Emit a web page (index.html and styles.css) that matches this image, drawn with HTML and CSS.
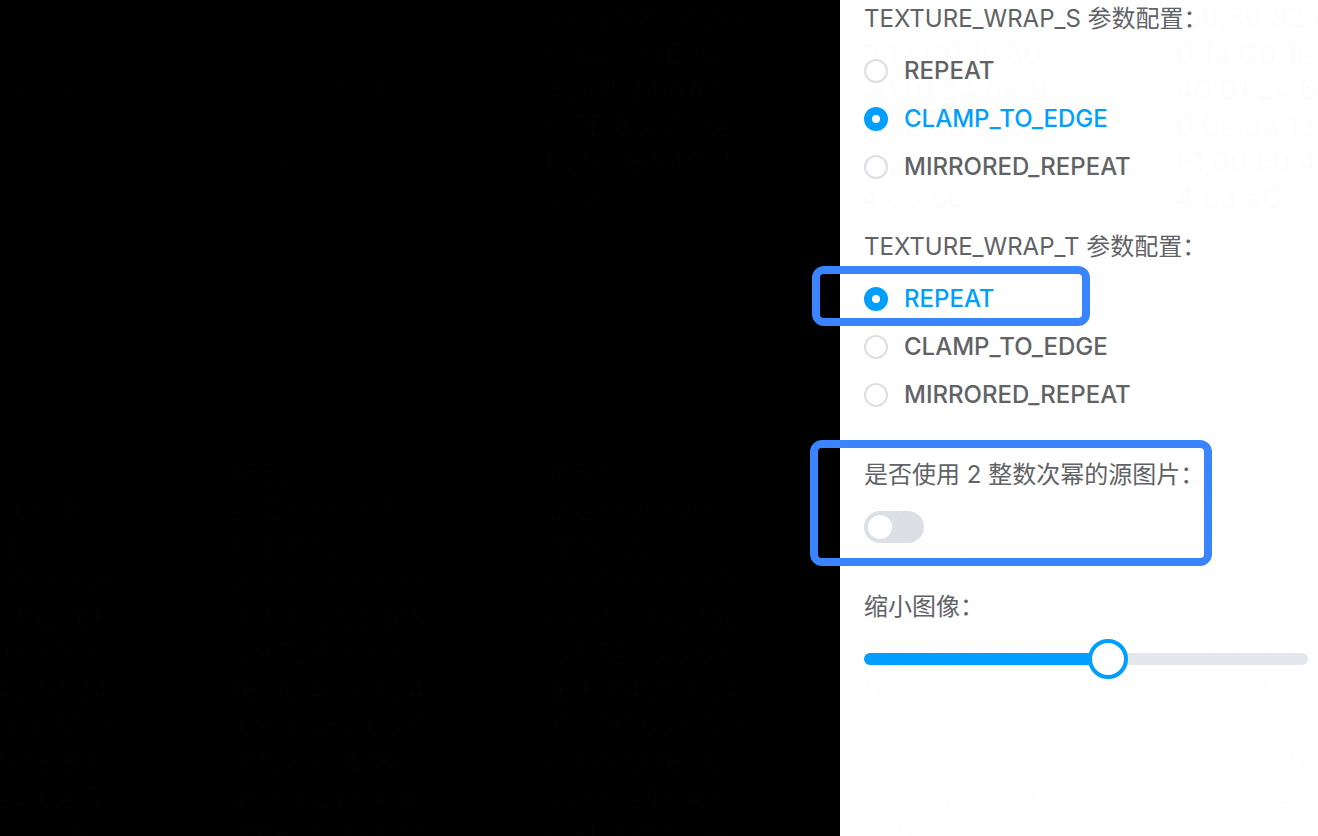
FILE: index.html
```html
<!DOCTYPE html>
<html lang="zh-CN">
<head>
<meta charset="utf-8">
<title>纹理参数配置</title>
<link rel="stylesheet" href="styles.css">
</head>
<body>
<main class="app">
  <canvas class="stage"></canvas>
  <form class="panel">
    <fieldset class="group">
      <legend class="label">TEXTURE_WRAP_S 参数配置：</legend>
      <label class="option"><input class="radio" type="radio" name="wrap-s"><span>REPEAT</span></label>
      <label class="option"><input class="radio" type="radio" name="wrap-s" checked><span>CLAMP_TO_EDGE</span></label>
      <label class="option"><input class="radio" type="radio" name="wrap-s"><span>MIRRORED_REPEAT</span></label>
    </fieldset>
    <fieldset class="group">
      <legend class="label">TEXTURE_WRAP_T 参数配置：</legend>
      <label class="option marked"><input class="radio" type="radio" name="wrap-t" checked><span>REPEAT</span></label>
      <label class="option"><input class="radio" type="radio" name="wrap-t"><span>CLAMP_TO_EDGE</span></label>
      <label class="option"><input class="radio" type="radio" name="wrap-t"><span>MIRRORED_REPEAT</span></label>
    </fieldset>
    <div class="group field marked">
      <label class="label" for="pot">是否使用 2 整数次幂的源图片：</label>
      <input class="switch" id="pot" type="checkbox" role="switch">
    </div>
    <div class="group field">
      <label class="label" for="scale">缩小图像：</label>
      <input class="slider" id="scale" type="range" min="0" max="100" step="0.5" value="55.5">
    </div>
  </form>
</main>
<div class="watermark" aria-hidden="true"></div>
<script src="watermark.js"></script>
</body>
</html>
```
FILE: styles.css
```css
*, *::before, *::after { box-sizing: border-box; }
body {
  margin: 0;
  background: #000;
  color: #606266;
  font: 24px/36px Inter, "Noto Sans CJK SC", sans-serif;
}
.app {
  display: grid;
  grid-template-columns: minmax(0, 1fr) 478px;
  height: 100vh;
  overflow: hidden;
}
.stage { width: 100%; height: 100%; background: #000; }
.panel {
  display: flex;
  flex-direction: column;
  gap: 38px;
  padding: 1px 10px 0 24px;
  background: #fff;
}
.group { margin: 0; padding: 0; border: 0; min-width: 0; }
.label { display: block; padding: 0; font-weight: 400; }
legend.label { margin-bottom: 10px; }
.option {
  position: relative;
  display: flex;
  align-items: center;
  gap: 16px;
  height: 48px;
  font-weight: 500;
}
.radio {
  appearance: none;
  width: 24px;
  height: 24px;
  margin: 0;
  border: 2px solid #dcdfe6;
  border-radius: 50%;
  background: #fff;
}
.radio:checked { border: 8px solid #009fff; }
.radio:checked + span { color: #009fff; }
.field {
  position: relative;
  display: flex;
  flex-direction: column;
  align-items: flex-start;
  gap: 18px;
}
.field + .field { margin-top: 8px; gap: 14px; }
.switch {
  appearance: none;
  width: 60px;
  height: 32px;
  margin: 0;
  padding: 4px;
  border-radius: 16px;
  background: #dcdfe6;
}
.switch::before {
  content: "";
  display: block;
  width: 24px;
  height: 24px;
  border-radius: 50%;
  background: #fff;
}
.switch:checked { background: #009fff; }
.switch:checked::before { margin-left: auto; }
.slider {
  appearance: none;
  width: 100%;
  height: 40px;
  margin: 0;
  background: none;
}
.slider::-webkit-slider-runnable-track {
  height: 12px;
  border-radius: 6px;
  background: linear-gradient(90deg, #009fff 55%, #e4e7ed 55%);
}
.slider::-webkit-slider-thumb {
  appearance: none;
  width: 40px;
  height: 40px;
  margin-top: -14px;
  border: 4px solid #009fff;
  border-radius: 50%;
  background: #fff;
}
.marked::after {
  content: "";
  position: absolute;
  border: 8px solid #3a84ff;
  border-radius: 12px;
  pointer-events: none;
}
.option.marked::after { top: -9px; left: -52px; width: 278px; height: 60px; }
.field.marked::after { top: -17px; left: -54px; width: 402px; height: 126px; }
.watermark {
  position: fixed;
  inset: 0;
  overflow: hidden;
  pointer-events: none;
}
.stamp {
  position: absolute;
  color: rgba(128, 144, 138, 0.016);
  font-size: 28px;
  line-height: 36px;
  white-space: pre;
}
.stamp.faint { color: rgba(128, 144, 138, 0.008); }
```
FILE: watermark.js
```javascript
const stampText = [
  "1652", "2023-06-09", "11:20:22", "0.0.0.0;0.0.0.0;", "0.0.0.0;192.168",
  ".39.72;0.0.0.0", "1E:80:40:01:24", ":69;36:83:63:0", "0:13:C0;1E:80:",
  "40:01:24:6A;B", "0:BE:83:13:0A:", "F1;00:E0:4C:8", "4:63:5C"
].join("\n");
const layer = document.querySelector(".watermark");
const places = [
  [-86, -252, true], [230, -252, true],
  [545, -252], [861, -252], [1176, -252],
  [-86, 456], [230, 456], [545, 456],
  [861, 456, true], [1176, 456, true]
];
for (const [x, y, faint] of places) {
  const stamp = document.createElement("div");
  stamp.className = faint ? "stamp faint" : "stamp";
  stamp.textContent = stampText;
  stamp.style.left = x + "px";
  stamp.style.top = y + "px";
  layer.append(stamp);
}
```
